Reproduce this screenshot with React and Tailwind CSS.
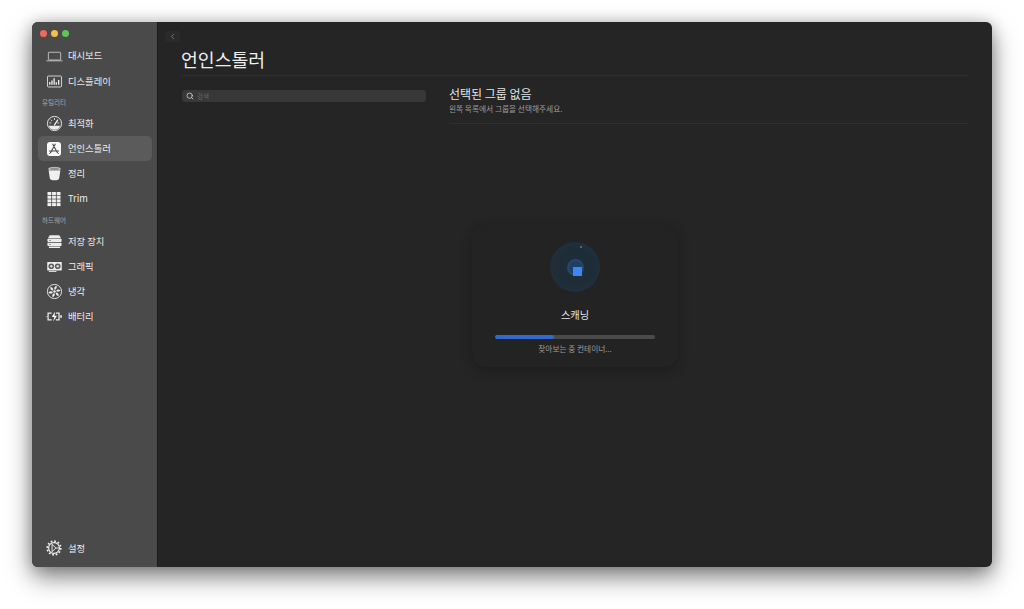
import React from "react";
import { Search, ChevronLeft } from "lucide-react";

const font = { fontFamily: '"Noto Sans CJK KR", "Liberation Sans", sans-serif' };

const Laptop = () => (
  <svg width="17" height="17" viewBox="0 0 18 18" fill="none" stroke="#dcdcdc" strokeWidth="0.8">
    <rect x="2.5" y="4.5" width="13" height="8.2" rx="0.8" />
    <path d="M0.8 13.6h16.4" strokeLinecap="round" />
  </svg>
);
const Display = () => (
  <svg width="17" height="17" viewBox="0 0 18 18" fill="none">
    <rect x="1.6" y="3.2" width="14.8" height="11.6" rx="1" stroke="#e8e8e8" strokeWidth="0.9" />
    <path d="M4 9.5v3M6.3 8v4.5M8.6 5.5v7M10.9 9.7v2.8M13.4 7.4v5.1" stroke="#f0f0f0" strokeWidth="1.4" />
  </svg>
);
const Gauge = () => (
  <svg width="17" height="17" viewBox="0 0 18 18" fill="none">
    <circle cx="9" cy="9" r="7.5" stroke="#ececec" strokeWidth="1" />
    <path d="M2.8 11.5h12.400a6.700 6.700 0 0 1-12.400 0z" fill="#ececec" />
    <path d="M9 10.500l3.300-5.100" stroke="#fff" strokeWidth="1.200" strokeLinecap="round" />
    <path d="M4 8.400h1.200M5.400 5.300l.8.8M9 3.600v1.200M13.700 8.400h-1.200" stroke="#ececec" strokeWidth="0.900" strokeLinecap="round" />
  </svg>
);
const AppIcon = () => (
  <svg width="16" height="16" viewBox="0 0 16 16" fill="none">
    <rect x="1" y="1" width="14" height="14" rx="3" fill="#fafafa" />
    <path d="M9.200 3.200L4.700 11.500M6.800 3.200l4.500 8.300M3.400 10h9.200" stroke="#4a4a4a" strokeWidth="1.100" strokeLinecap="round" />
    <path d="M3.700 12.600l.7-1M12.300 12.600l-.7-1" stroke="#4a4a4a" strokeWidth="1" strokeLinecap="round" />
  </svg>
);
const Bin = () => (
  <svg width="15" height="15" viewBox="0 0 16 16">
    <ellipse cx="8" cy="3.200" rx="6.400" ry="1.700" fill="#8f8f8f" stroke="#f0f0f0" strokeWidth="0.700" />
    <path d="M1.700 4.500c1.400 1 11.200 1 12.600 0L13 13c-.2 1.400-2 2.200-5 2.200S3.200 14.400 3 13z" fill="#f0f0f0" />
  </svg>
);
const Grid = () => (
  <svg width="16" height="16" viewBox="0 0 16 16" fill="#f0f0f0">
    {[1.500, 6.100, 10.700].map((x) =>
      [1, 4.700, 8.400, 12.100].map((y) => <rect key={`${x}-${y}`} x={x} y={y} width="3.800" height="3" />)
    )}
  </svg>
);
const Storage = () => (
  <svg width="17" height="17" viewBox="0 0 18 18" fill="#ececec">
    <path d="M4 2.500h10l2 3H2z" />
    <rect x="1.500" y="6.200" width="15" height="3.400" rx="0.800" />
    <rect x="1.500" y="10.400" width="15" height="3.400" rx="0.800" />
    <rect x="3" y="14.300" width="12" height="1.600" rx="0.600" />
    <path d="M3.500 7.900h1.500M3.500 12.100h1.500" stroke="#4a4a4a" strokeWidth="0.800" />
  </svg>
);
const Gpu = () => (
  <svg width="17" height="17" viewBox="0 0 18 18" fill="none">
    <rect x="1.300" y="4.200" width="15.400" height="9" rx="0.600" fill="#ececec" />
    <circle cx="5.600" cy="8.700" r="3" fill="#5a5a5a" />
    <circle cx="12.400" cy="8.700" r="3" fill="#5a5a5a" />
    <circle cx="5.600" cy="8.700" r="1.300" fill="#ddd" />
    <circle cx="12.400" cy="8.700" r="1.300" fill="#ddd" />
    <path d="M3 14.200h8" stroke="#ececec" strokeWidth="1" />
  </svg>
);
const Fan = () => (
  <svg width="17" height="17" viewBox="0 0 18 18" fill="none">
    <circle cx="9" cy="9" r="7.500" stroke="#ececec" strokeWidth="1" />
    <circle cx="9" cy="9" r="1.300" fill="#ececec" />
    {[0, 60, 120, 180, 240, 300].map((a) => (
      <path key={a} transform={`rotate(${a} 9 9)`} d="M9.300 7.300C8.200 5.800 8.800 3.500 11 2.900c.9 1.400.4 3.400-1.700 4.400z" fill="#ececec" />
    ))}
  </svg>
);
const Battery = () => (
  <svg width="17" height="17" viewBox="0 0 18 18" fill="none">
    <path d="M6 5.400H2.200v7.200H6M10.500 5.400h3.300v7.200h-3.300" stroke="#ececec" strokeWidth="1.300" />
    <path d="M9.500 3.800L6.200 9.400h2.600L7.600 14.200l4-6H9z" fill="#fff" />
    <path d="M15 7.600h1.800v2.800H15z" fill="#ececec" />
    <path d="M.3 9h1.200" stroke="#ececec" strokeWidth="0.800" />
  </svg>
);
const Gear = () => (
  <svg width="16" height="16" viewBox="0 0 18 18" fill="none" stroke="#f0f0f0">
    <circle cx="9" cy="9" r="6.100" strokeWidth="1.300" />
    <circle cx="9" cy="9" r="7.700" strokeWidth="1.800" strokeDasharray="2 2.030" />
    <path d="M6.800 4.800L11.200 9l-4.400 4.200zM11.200 9h3.400" strokeWidth="1" />
  </svg>
);

const Item = ({ icon, label, active }) => (
  <div className={`ml-[6px] mr-[5px] flex h-[25.200px] items-center rounded-[5px] pl-[7px] ${active ? "bg-[#5b5b5b]" : ""}`}>
    <span className="flex w-[18px] items-center justify-center">{icon}</span>
    <span className="ml-[5px] text-[9.300px] leading-none text-[#ececec]">{label}</span>
  </div>
);
const Section = ({ label }) => (
  <div className="flex h-[17px] items-center pl-[10px] text-[6.500px] leading-none text-[#a8a8a8]">{label}</div>
);

export default function App() {
  return (
    <div className="h-[609px] w-[1024px] overflow-hidden bg-white pl-[32px] pt-[22px]" style={font}>
      <div className="flex h-[545px] w-[960px] overflow-hidden rounded-[6px] bg-[#252525] shadow-[0_10px_24px_rgba(0,0,0,0.5),0_0_14px_rgba(0,0,0,0.18)]">
        <aside className="flex w-[126px] shrink-0 flex-col border-r border-[#1b1b1b] bg-[#4a4a4a] pb-[6px]">
          <div className="flex h-[21.500px] items-center gap-[4.500px] pl-[8px] pt-[1px]">
            <span className="h-[6.500px] w-[6.500px] rounded-full bg-[#ec6a5e]" />
            <span className="h-[6.500px] w-[6.500px] rounded-full bg-[#f4bf4f]" />
            <span className="h-[6.500px] w-[6.500px] rounded-full bg-[#61c554]" />
          </div>
          <Item icon={<Laptop />} label="대시보드" />
          <Item icon={<Display />} label="디스플레이" />
          <Section label="유틸리티" />
          <Item icon={<Gauge />} label="최적화" />
          <Item icon={<AppIcon />} label="언인스톨러" active />
          <Item icon={<Bin />} label="정리" />
          <Item icon={<Grid />} label="Trim" />
          <Section label="하드웨어" />
          <Item icon={<Storage />} label="저장 장치" />
          <Item icon={<Gpu />} label="그래픽" />
          <Item icon={<Fan />} label="냉각" />
          <Item icon={<Battery />} label="배터리" />
          <div className="mt-auto">
            <Item icon={<Gear />} label="설정" />
          </div>
        </aside>

        <main className="relative flex min-w-0 flex-1 flex-col pl-[23px] pr-[24px]">
          <div className="-ml-[16px] mt-[9px] flex h-[11px] w-[15px] items-center justify-center rounded-[2px] bg-[#2a2a2a]">
            <ChevronLeft size={9} color="#a8a8a8" strokeWidth={1.500} />
          </div>
          <h1 className="mt-[3px] h-[30px] text-[18.300px] font-normal leading-[28px] text-[#eeeeee]">언인스톨러</h1>
          <div className="h-px bg-[#2e2e2e]" />
          <div className="mt-[7px] flex gap-[23px]">
            <div className="w-[245px] shrink-0 pl-px pt-[7px]">
              <div className="flex h-[12px] items-center rounded-[3px] bg-[#383838] pl-[3.500px]">
                <Search size={8} color="#d0d0d0" strokeWidth={2.500} />
                <span className="ml-[3.500px] text-[6.500px] leading-none text-[#666666]">검색</span>
              </div>
            </div>
            <div className="min-w-0 flex-1">
              <h2 className="mt-[2px] text-[12px] font-normal leading-[17px] text-[#e4e4e4]">선택된 그룹 없음</h2>
              <p className="mt-[1px] text-[7.700px] leading-[12px] text-[#9c9c9c]">왼쪽 목록에서 그룹을 선택해주세요.</p>
              <div className="mt-[8px] h-px bg-[#303030]" />
            </div>
          </div>

          <div className="absolute left-[314px] top-[203px] flex h-[142px] w-[206px] flex-col items-center rounded-[14px] bg-[#232323] pt-[17px] shadow-[0_3px_12px_rgba(0,0,0,0.28)]">
            <div className="relative flex h-[50px] w-[50px] items-center justify-center rounded-full bg-[#1f2d38] shadow-[inset_0_0_10px_rgba(40,60,80,0.4)]">
              <div className="h-[13px] w-[13px] rounded-full bg-[#1b3f66] ring-2 ring-[#24486c]" />
              <div className="absolute left-[23px] top-[25px] h-[9px] w-[9px] bg-[#3f87f0]" />
              <div className="absolute left-[30px] top-[4px] h-[1.500px] w-[1.500px] rounded-full bg-[#5c7a90]" />
            </div>
            <div className="mt-[15px] text-[10.200px] leading-[15px] text-[#e6e6e6]">스캐닝</div>
            <div className="mt-[13px] h-[4px] w-[160px] overflow-hidden rounded-full bg-[#4a4a4a]">
              <div className="h-full rounded-full bg-[#3268d0]" style={{ width: "37%" }} />
            </div>
            <div className="mt-[4px] text-[7.700px] leading-[12px] text-[#9c9c9c]">찾아보는 중 컨테이너...</div>
          </div>
        </main>
      </div>
    </div>
  );
}
